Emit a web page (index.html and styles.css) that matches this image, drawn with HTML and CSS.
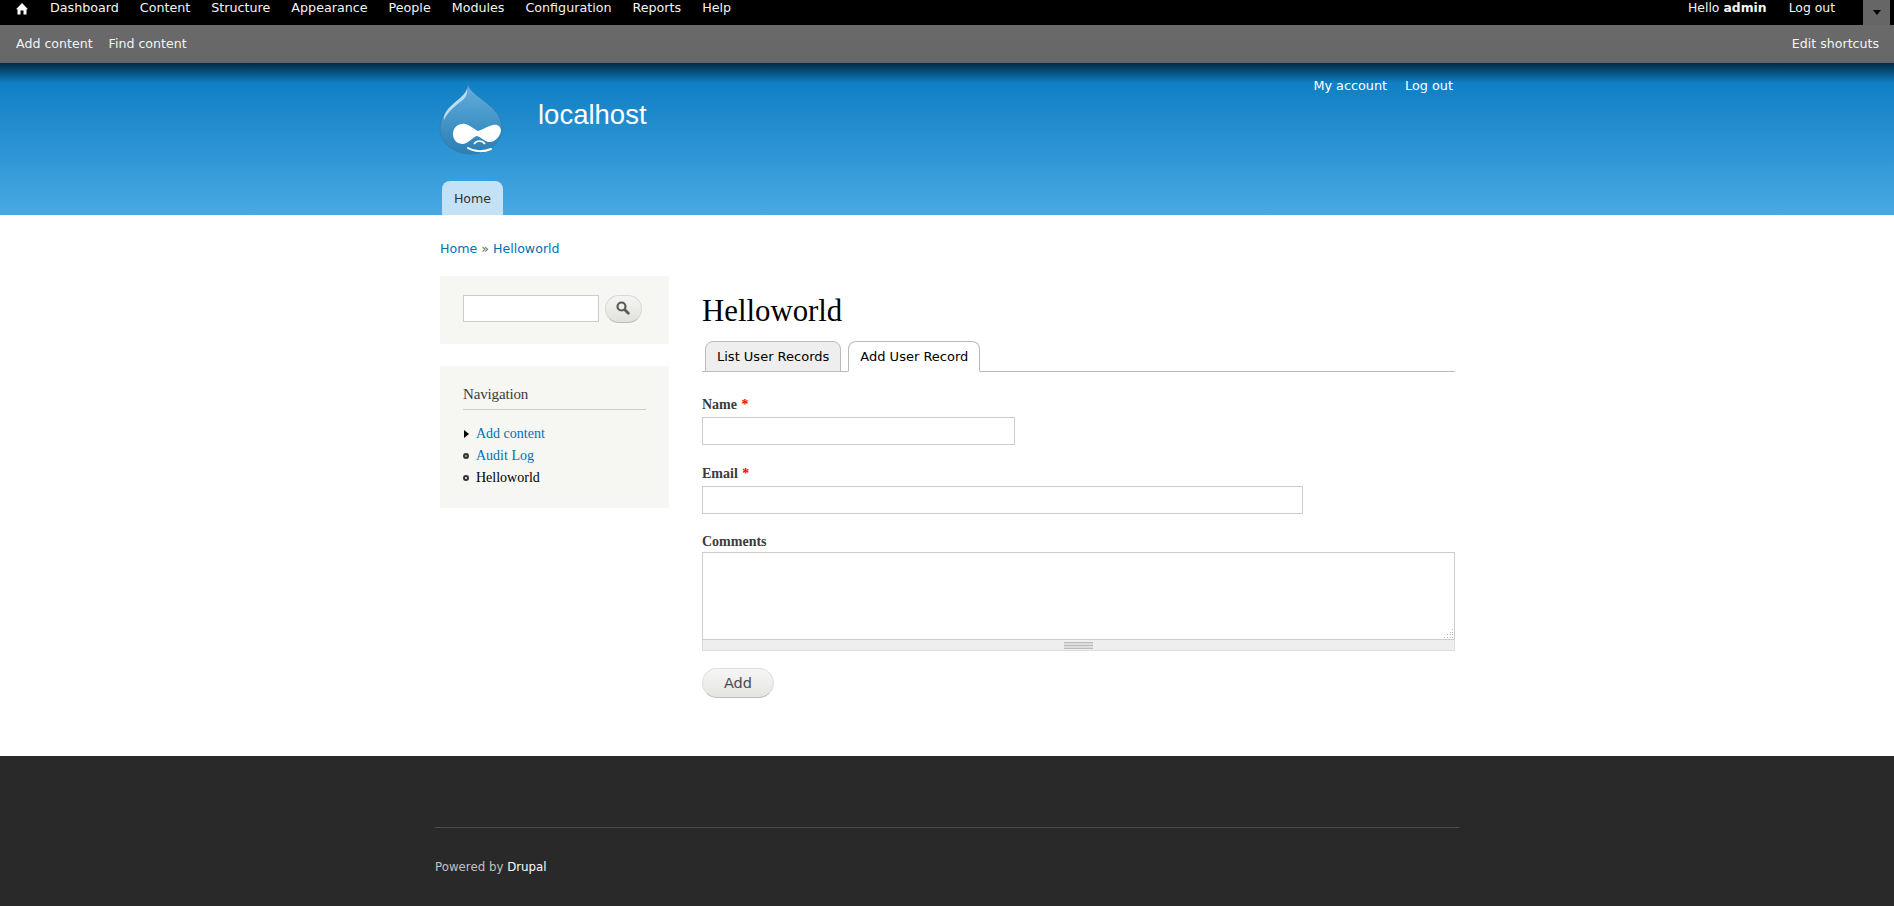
FILE: index.html
```html
<!DOCTYPE html>
<html lang="en">
<head>
    <meta charset="UTF-8">
    <title>Add User Record | localhost</title>
    <link rel="stylesheet" href="styles.css">
</head>
<body>
    <div class="toolbar">
        <nav class="toolbar-menu">
            <a class="toolbar-home" href="#">
                <svg width="12" height="12" viewBox="0 0 12 12"><path fill="#fff" d="M6 0 12 6.200H10.500V11.500H7.500V7.500H4.500V11.500H1.500V6.200H0z"/></svg>
            </a>
            <a href="#">Dashboard</a>
            <a href="#">Content</a>
            <a href="#">Structure</a>
            <a href="#">Appearance</a>
            <a href="#">People</a>
            <a href="#">Modules</a>
            <a href="#">Configuration</a>
            <a href="#">Reports</a>
            <a href="#">Help</a>
        </nav>
        <div class="toolbar-user">
            <span>Hello <strong>admin</strong></span>
            <a href="#">Log out</a>
            <span class="toolbar-toggle"><span class="toggle-arrow"></span></span>
        </div>
    </div>
    <div class="shortcuts">
        <div class="shortcut-links">
            <a href="#">Add content</a>
            <a href="#">Find content</a>
        </div>
        <a href="#">Edit shortcuts</a>
    </div>

    <header class="site-header">
        <div class="wrap header-inner">
            <div class="header-top">
                <svg class="logo" width="64" height="72" viewBox="0 0 64 72">
                    <defs>
                        <linearGradient id="drop" x1="0" y1="0" x2="0" y2="1">
                            <stop offset="0" stop-color="#64aedd"/>
                            <stop offset="0.5" stop-color="#4596c9"/>
                            <stop offset="1" stop-color="#2b7fb2"/>
                        </linearGradient>
                    </defs>
                    <path fill="url(#drop)" stroke="#2f7fb0" d="M29 1C31 9 41 14 49 21 58 28 63 36 63 45 63 60 49 71 32 71 15 71 1 60 1 45 1 34 8 26 15 20 22 14 28 9 29 1z"/>
                    <path fill="#d5ebf8" opacity="0.8" d="M28 6C26 13 16 18 9 26 6 30 4 34 5 37 8 30 15 24 21 19 26 16 29 11 28 6z"/>
                    <path fill="#fff" d="M14 51C14 44 20 40 26 41 31 42 35 46 39 48 43 47 49 43 54 42 59 41 62 44 62 48 61 54 55 60 49 59 45 58 42 54 38 53 34 54 30 60 24 61 18 61 14 57 14 51z"/>
                    <path fill="none" stroke="#fff" stroke-width="1.600" d="M35 61C38 57 43 57 46 61"/>
                    <path fill="none" stroke="#fff" stroke-width="2" stroke-linecap="round" d="M29 65C35 69 45 69 52 66"/>
                </svg>
                <div class="site-name">localhost</div>
                <nav class="secondary-menu">
                    <a href="#">My account</a>
                    <a href="#">Log out</a>
                </nav>
            </div>
            <nav class="main-menu"><a class="main-tab" href="#">Home</a></nav>
        </div>
    </header>

    <div class="wrap page">
        <div class="breadcrumb"><a href="#">Home</a> <span class="crumb-sep">»</span> <a href="#">Helloworld</a></div>
        <div class="columns">
            <aside class="sidebar">
                <div class="block block-search">
                    <input class="search-input" type="text">
                    <button class="search-button" type="button">
                        <svg width="14" height="14" viewBox="0 0 14 14"><circle cx="5.500" cy="5.500" r="4" fill="none" stroke="#5a5a5a" stroke-width="2.200"/><path stroke="#5a5a5a" stroke-width="2.800" stroke-linecap="round" d="M9 9 12.300 12.300"/></svg>
                    </button>
                </div>
                <div class="block block-nav">
                    <h2 class="block-title">Navigation</h2>
                    <ul class="nav-list">
                        <li class="collapsed"><a href="#">Add content</a></li>
                        <li class="leaf"><a href="#">Audit Log</a></li>
                        <li class="leaf active">Helloworld</li>
                    </ul>
                </div>
            </aside>
            <main class="content">
                <h1 class="page-title">Helloworld</h1>
                <ul class="tabs">
                    <li><a href="#">List User Records</a></li>
                    <li class="tab-active"><a href="#">Add User Record</a></li>
                </ul>
                <form class="user-form">
                    <div class="form-item">
                        <label>Name <span class="required">*</span></label>
                        <input class="text-name" type="text">
                    </div>
                    <div class="form-item">
                        <label>Email <span class="required">*</span></label>
                        <input class="text-email" type="text">
                    </div>
                    <div class="form-item item-comments">
                        <label>Comments</label>
                        <div class="comments-box">
                            <textarea class="comments"></textarea>
                            <svg class="resizer" width="10" height="9" viewBox="0 0 10 9" fill="#bbb">
                                <rect x="8" y="0" width="1" height="1"/>
                                <rect x="6" y="3" width="1" height="1"/><rect x="8" y="3" width="1" height="1"/>
                                <rect x="3" y="5" width="1" height="1"/><rect x="6" y="5" width="1" height="1"/><rect x="8" y="5" width="1" height="1"/>
                                <rect x="0" y="8" width="1" height="1"/><rect x="3" y="8" width="1" height="1"/><rect x="6" y="8" width="1" height="1"/><rect x="8" y="8" width="1" height="1"/>
                            </svg>
                        </div>
                        <div class="grippie"><span class="grip-handle"></span></div>
                    </div>
                    <button class="add-button" type="button">Add</button>
                </form>
            </main>
        </div>
    </div>

    <footer class="site-footer">
        <div class="wrap footer-inner">
            <div class="footer-text">Powered by <a href="#">Drupal</a></div>
        </div>
    </footer>
</body>
</html>
```

FILE: styles.css
```css
*,
*::before {
    box-sizing: border-box;
    margin: 0;
    padding: 0;
}

body {
    font-family: "Liberation Serif", serif;
    font-size: 14px;
    color: #3b3b3b;
    background-color: #fff;
}

a {
    text-decoration: none;
}

.wrap {
    width: 1024px;
    margin: 0 auto;
}

/* Toolbar */
.toolbar {
    display: flex;
    justify-content: space-between;
    height: 25px;
    padding-left: 15px;
    background-color: #000;
    color: #f4f4f4;
    font-family: "DejaVu Sans", sans-serif;
    font-size: 12.700px;
    line-height: 16px;
}

.toolbar a,
.shortcuts a {
    color: #f4f4f4;
}

.toolbar-menu {
    display: flex;
    gap: 21px;
}

.toolbar-home {
    display: flex;
    width: 14px;
    height: 18px;
    padding-left: 1px;
    align-items: center;
}

.toolbar-user {
    display: flex;
    gap: 22px;
    font-size: 12.400px;
}

.toolbar-toggle {
    display: flex;
    justify-content: center;
    width: 27px;
    height: 25px;
    margin-right: 4px;
    margin-left: 6px;
    background-color: #666;
}

.toggle-arrow {
    width: 0;
    height: 0;
    margin-top: 10px;
    border-top: 5px solid #000;
    border-left: 4px solid transparent;
    border-right: 4px solid transparent;
}

.shortcuts {
    display: flex;
    justify-content: space-between;
    align-items: center;
    height: 38px;
    padding: 0 15px 2px 16px;
    background: linear-gradient(#6a6a6a, #666);
    font-family: "DejaVu Sans", sans-serif;
    font-size: 12.600px;
}

.shortcut-links {
    display: flex;
    gap: 16px;
}

/* Header */
.site-header {
    height: 152px;
    background: linear-gradient(rgba(0, 0, 0, 0.65), rgba(0, 0, 0, 0) 20px), linear-gradient(#0779bf, #48a9e4);
}

.header-inner {
    display: flex;
    flex-direction: column;
    justify-content: space-between;
    height: 100%;
    padding-left: 4px;
    padding-right: 6px;
}

.header-top {
    display: flex;
    padding-top: 20px;
}

.logo {
    flex-shrink: 0;
}

.site-name {
    flex: 1;
    margin-left: 35px;
    padding-top: 15px;
    font-family: "Liberation Sans", sans-serif;
    font-size: 27.500px;
    line-height: 34px;
    color: #fff;
}

.secondary-menu {
    display: flex;
    gap: 18px;
    margin-top: -5px;
    font-family: "DejaVu Sans", sans-serif;
    font-size: 12.800px;
    line-height: 16px;
}

.secondary-menu a {
    color: #fff;
}

.main-menu {
    display: flex;
    padding-left: 3px;
}

.main-tab {
    width: 61px;
    height: 34px;
    background-color: #c5e1f5;
    border-radius: 8px 8px 0 0;
    color: #333;
    font-family: "DejaVu Sans", sans-serif;
    font-size: 12.600px;
    line-height: 35px;
    text-align: center;
}

/* Page */
.page {
    height: 541px;
    padding: 0 4px 0 5px;
}

.breadcrumb {
    height: 61px;
    padding-top: 26px;
    font-family: "DejaVu Sans", sans-serif;
    font-size: 12.600px;
    line-height: 16px;
    color: #666;
}

.breadcrumb a,
.nav-list a {
    color: #0071b3;
}

.columns {
    display: grid;
    grid-template-columns: 229px 1fr;
    column-gap: 33px;
}

.block {
    background-color: #f6f6f2;
}

.block-search {
    display: flex;
    gap: 6px;
    height: 68px;
    padding: 19px 23px;
}

.search-input {
    width: 136px;
    height: 27px;
    border: 1px solid #ccc;
}

.search-button {
    display: flex;
    justify-content: center;
    align-items: center;
    width: 37px;
    height: 28px;
    padding: 0 2px 2px 0;
    border: 1px solid #d8d8d8;
    border-bottom-color: #bbb;
    border-radius: 14px;
    background: linear-gradient(#f6f6f5, #e0e0dc);
}

.block-nav {
    height: 142px;
    margin-top: 22px;
    padding: 18px 23px 0;
}

.block-title {
    padding-bottom: 5px;
    border-bottom: 1px solid #ccc;
    font-size: 15px;
    font-weight: normal;
    letter-spacing: -0.150px;
    line-height: 20px;
}

.nav-list {
    margin-top: 13px;
    list-style: none;
    line-height: 22px;
}

.nav-list li {
    position: relative;
    padding-left: 13px;
    color: #000;
}

.collapsed::before {
    content: "";
    position: absolute;
    top: 7px;
    left: 1px;
    border-left: 5px solid #000;
    border-top: 4px solid transparent;
    border-bottom: 4px solid transparent;
}

.leaf::before {
    content: "";
    position: absolute;
    top: 8px;
    left: 0;
    width: 6px;
    height: 6px;
    border: 2px solid #333;
    border-radius: 50%;
    background-color: #aaa;
}

.active::before {
    background-color: #fff;
}

/* Main content */
.page-title {
    padding-top: 17px;
    font-size: 30.800px;
    font-weight: normal;
    line-height: 36px;
    color: #000;
}

.tabs {
    display: flex;
    gap: 7px;
    height: 31px;
    margin-top: 12px;
    padding-left: 3px;
    border-bottom: 1px solid #bbb;
    list-style: none;
}

.tabs li {
    height: 31px;
    padding: 0 11px;
    border: 1px solid #bbb;
    border-radius: 8px 8px 0 0;
    background-color: #eee;
    font-family: "DejaVu Sans", sans-serif;
    font-size: 13px;
    line-height: 29px;
}

.tabs a {
    color: #000;
}

.tabs .tab-active {
    background-color: #fff;
    border-bottom-color: #fff;
}

.user-form {
    padding-top: 24px;
}

.form-item {
    margin-bottom: 20px;
}

.form-item label {
    display: block;
    height: 21px;
    font-weight: bold;
    line-height: 18px;
}

.required {
    margin-left: 1px;
    color: #f00;
}

.text-name,
.text-email {
    display: block;
    height: 28px;
    border: 1px solid #ccc;
}

.text-name {
    width: 313px;
}

.text-email {
    width: 601px;
}

.item-comments {
    margin-bottom: 17px;
}

.item-comments label {
    height: 18px;
    line-height: 16px;
}

.comments-box {
    position: relative;
}

.comments {
    display: block;
    width: 100%;
    height: 88px;
    border: 1px solid #ccc;
    resize: none;
}

.resizer {
    position: absolute;
    right: 1px;
    bottom: 2px;
}

.grippie {
    display: flex;
    justify-content: center;
    align-items: center;
    height: 11px;
    border: 1px solid #ddd;
    border-top: 0;
    background-color: #eee;
}

.grip-handle {
    width: 29px;
    height: 7px;
    background: linear-gradient(#bbb 1px, #ddd 1px, #ddd 3px, #bbb 3px, #bbb 4px, #ddd 4px, #ddd 6px, #bbb 6px);
}

.add-button {
    display: block;
    width: 72px;
    height: 30px;
    border: 1px solid #ddd;
    border-bottom-color: #bbb;
    border-radius: 15px;
    background: linear-gradient(#f6f6f5, #e4e4e1);
    color: #4a4a4a;
    font-family: "DejaVu Sans", sans-serif;
    font-size: 14.500px;
}

/* Footer */
.site-footer {
    height: 150px;
    background-color: #292929;
}

.footer-inner {
    padding-top: 71px;
}

.footer-text {
    padding-top: 31px;
    border-top: 1px solid #4b4b4b;
    font-family: "DejaVu Sans", sans-serif;
    font-size: 11.800px;
    line-height: 16px;
    color: #c0c0c0;
}

.footer-text a {
    color: #fcfcfc;
}
```
